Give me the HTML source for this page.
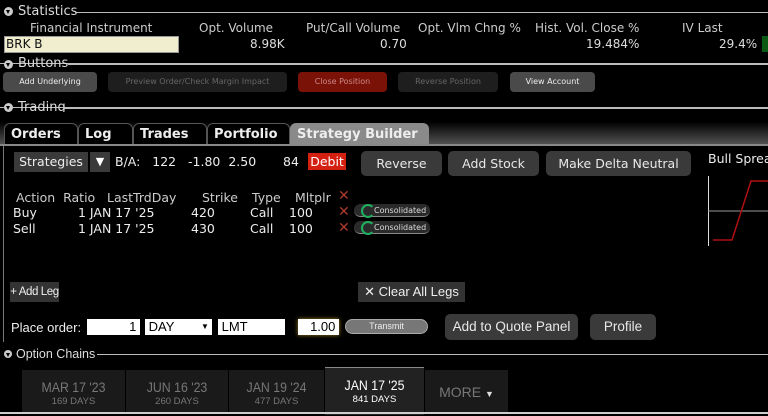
<html><head><style>
body{margin:0;width:768px;height:414px;background:#000;position:relative;overflow:hidden;font-family:"DejaVu Sans","Liberation Sans",sans-serif;color:#ddd}
div,span{position:absolute;white-space:nowrap}
.h{font-size:13px;color:#ddd}
.tri{width:9px;height:9px;border-radius:50%;background:#ccc}
.tri:after{content:"";position:absolute;left:2px;top:3px;border-left:2.5px solid transparent;border-right:2.5px solid transparent;border-top:4px solid #000}
.ln{height:1px;background:#bbb}
.c{font-size:12px;color:#ccc}
.b{font-size:8px;border-radius:4px;text-align:center;line-height:20px;height:20px}
.tab{top:123px;height:22px;border-radius:6px 6px 0 0;background:#000;border:1px solid #555;border-bottom:none;font:bold 13px "DejaVu Sans",sans-serif;color:#eee;line-height:22px;padding-left:6px;box-sizing:border-box}
.btn{background:#3a3a3a;border-radius:5px;font-size:12.5px;color:#e8e8e8;text-align:center}
.t{font-size:12.5px;color:#eee}
.ot{top:370px;height:44px;background:#1a1a1a;text-align:center;font-family:"Liberation Sans",sans-serif;color:#777}
.ot b{display:block;font-weight:normal;font-size:14px;margin-top:9px;transform:scaleX(.88)}
.ot i{display:block;font-style:normal;font-size:9.5px;margin-top:1px}
</style></head><body>
<div class="tri" style="left:4px;top:7px"></div><div class="h" style="left:18px;top:4px">Statistics</div><div class="ln" style="left:75px;top:12px;width:693px"></div>
<div class="c" style="left:30px;top:21px">Financial Instrument</div>
<div class="c" style="left:199px;top:21px">Opt. Volume</div>
<div class="c" style="left:306px;top:21px">Put/Call Volume</div>
<div class="c" style="left:418px;top:21px">Opt. Vlm Chng %</div>
<div class="c" style="left:535px;top:21px">Hist. Vol. Close %</div>
<div class="c" style="left:682px;top:21px">IV Last</div>
<div style="left:4px;top:36px;width:172px;height:15px;background:#f0eecf;border:1px solid #999;color:#111;font-size:12px;line-height:15px;padding-left:1px">BRK B</div>
<div class="c" style="left:250px;top:37px;color:#ddd">8.98K</div>
<div class="c" style="left:380px;top:37px;color:#ddd">0.70</div>
<div class="c" style="left:586px;top:37px;color:#ddd">19.484%</div>
<div class="c" style="left:719px;top:37px;color:#ddd">29.4%</div>
<div style="left:762px;top:36px;width:8px;height:16px;background:#0a5a14"></div>
<div class="ln" style="left:0;top:63px;width:768px"></div>
<div class="tri" style="left:4px;top:60px"></div><div class="h" style="left:18px;top:56px">Buttons</div><div class="ln" style="left:68px;top:64px;width:700px"></div>
<div class="b" style="left:3px;top:72px;width:94px;background:#4a4a4a;color:#eee">Add Underlying</div>
<div class="b" style="left:108px;top:72px;width:179px;background:#1e1e1e;color:#666">Preview Order/Check Margin Impact</div>
<div class="b" style="left:298px;top:72px;width:89px;background:#7a1208;color:#c88">Close Position</div>
<div class="b" style="left:398px;top:72px;width:100px;background:#1e1e1e;color:#666">Reverse Position</div>
<div class="b" style="left:510px;top:72px;width:85px;background:#4a4a4a;color:#eee">View Account</div>
<div class="ln" style="left:0;top:107px;width:768px"></div>
<div class="tri" style="left:4px;top:103px"></div><div class="h" style="left:18px;top:100px">Trading</div><div class="ln" style="left:64px;top:108px;width:704px"></div>
<div style="left:0;top:112px;width:768px;height:33px;background:linear-gradient(#000,#000 30%,#555)"></div>
<div class="tab" style="left:4px;width:74px">Orders</div>
<div class="tab" style="left:78px;width:55px">Log</div>
<div class="tab" style="left:133px;width:74px">Trades</div>
<div class="tab" style="left:207px;width:83px">Portfolio</div>
<div class="tab" style="left:290px;width:139px;background:#8a8a8a;color:#eee;border-color:#8a8a8a">Strategy Builder</div>
<div style="left:0;top:144px;width:768px;height:2px;background:#888"></div>
<div style="left:3px;top:146px;width:1px;height:196px;background:#777"></div>
<div style="left:14px;top:152px;width:74px;height:20px;background:#3a3a3a;font-size:12.5px;line-height:20px;text-align:center;color:#eee">Strategies</div>
<div style="left:90px;top:152px;width:20px;height:20px;background:#3a3a3a;font-size:11px;line-height:20px;text-align:center;color:#fff">▼</div>
<div class="t" style="left:115px;top:154px">B/A:&nbsp;&nbsp;&nbsp;122&nbsp;&nbsp;&nbsp;-1.80&nbsp;&nbsp;2.50</div>
<div class="t" style="left:283px;top:154px">84</div>
<div style="left:308px;top:153px;width:38px;height:17px;background:#d42010;color:#fff;font-size:12.5px;line-height:17px;text-align:center">Debit</div>
<div class="btn" style="left:361px;top:151px;width:81px;height:25px;line-height:25px">Reverse</div>
<div class="btn" style="left:448px;top:151px;width:91px;height:25px;line-height:25px">Add Stock</div>
<div class="btn" style="left:546px;top:151px;width:145px;height:25px;line-height:25px">Make Delta Neutral</div>
<div class="t" style="left:708px;top:151px">Bull Spread</div>
<svg style="position:absolute;left:700px;top:170px" width="68" height="85"><line x1="8.5" y1="6" x2="8.5" y2="76" stroke="#ddd"/><line x1="8" y1="41" x2="68" y2="41" stroke="#999"/><polyline points="13,70 32,70 51,11 68,11" fill="none" stroke="#b01010" stroke-width="1.5"/></svg>
<div class="t" style="left:16px;top:190px;color:#ccc">Action&nbsp;&nbsp;Ratio</div>
<div class="t" style="left:107px;top:190px;color:#ccc">LastTrdDay</div>
<div class="t" style="left:202px;top:190px;color:#ccc">Strike</div>
<div class="t" style="left:252px;top:190px;color:#ccc">Type</div>
<div class="t" style="left:295px;top:190px;color:#ccc">Mltplr</div>
<div style="left:338px;top:188px;color:#b03a30;font-size:14px;font-weight:bold">✕</div>
<div class="t" style="left:13px;top:205px">Buy</div><div class="t" style="left:78px;top:205px">1 JAN 17 '25</div><div class="t" style="left:191px;top:205px">420</div><div class="t" style="left:250px;top:205px">Call</div><div class="t" style="left:289px;top:205px">100</div>
<div style="left:338px;top:204px;color:#b03a30;font-size:14px;font-weight:bold">✕</div>
<div class="t" style="left:13px;top:221px">Sell</div><div class="t" style="left:78px;top:221px">1 JAN 17 '25</div><div class="t" style="left:191px;top:221px">430</div><div class="t" style="left:250px;top:221px">Call</div><div class="t" style="left:289px;top:221px">100</div>
<div style="left:338px;top:220px;color:#b03a30;font-size:14px;font-weight:bold">✕</div>
<div style="left:354px;top:204px;width:76px;height:13px;border-radius:7px;background:#2a2a2a;border-bottom:1px solid #888;font-size:8px;line-height:13px;color:#ddd;padding-left:20px;box-sizing:border-box">Consolidated</div>
<div style="left:361px;top:204px;width:10px;height:10px;border:2px solid #1fb060;border-radius:50%;border-right-color:transparent"></div>
<div style="left:354px;top:221px;width:76px;height:13px;border-radius:7px;background:#2a2a2a;border-bottom:1px solid #888;font-size:8px;line-height:13px;color:#ddd;padding-left:20px;box-sizing:border-box">Consolidated</div>
<div style="left:361px;top:221px;width:10px;height:10px;border:2px solid #1fb060;border-radius:50%;border-right-color:transparent"></div>
<div style="left:10px;top:282px;width:49px;height:20px;background:#333;font:11.5px 'Liberation Sans',sans-serif;letter-spacing:-0.4px;line-height:20px;text-align:center;color:#eee">+ Add Leg</div>
<div style="left:358px;top:282px;width:107px;height:20px;background:#333;font:13px 'Liberation Sans',sans-serif;line-height:20px;text-align:center;color:#eee">✕ Clear All Legs</div>
<div style="left:11px;top:320px;font:13px 'Liberation Sans',sans-serif;color:#eee">Place order:</div>
<div style="left:87px;top:319px;width:53px;height:16px;background:#fff;color:#000;font:13px 'Liberation Sans',sans-serif;text-align:right;line-height:16px">1&nbsp;</div>
<div style="left:145px;top:319px;width:67px;height:16px;background:#fff;color:#000;font:13px 'Liberation Sans',sans-serif;line-height:16px">&nbsp;DAY<span style="left:56px;top:0;font-size:8px">▼</span></div>
<div style="left:218px;top:319px;width:67px;height:16px;background:#fff;color:#000;font:13px 'Liberation Sans',sans-serif;line-height:16px">&nbsp;LMT</div>
<div style="left:298px;top:319px;width:41px;height:16px;background:#fff;color:#000;font:13px 'Liberation Sans',sans-serif;text-align:right;line-height:16px;box-shadow:0 0 4px #a08020">1.00&nbsp;</div>
<div style="left:345px;top:319px;width:83px;height:15px;border-radius:8px;background:#777;border:1px solid #aaa;box-sizing:border-box;font:9px 'Liberation Sans',sans-serif;color:#eee;text-align:center;line-height:13px">Transmit</div>
<div class="btn" style="left:445px;top:314px;width:133px;height:26px;line-height:26px;font-family:'Liberation Sans',sans-serif;font-size:13.5px">Add to Quote Panel</div>
<div class="btn" style="left:590px;top:314px;width:66px;height:26px;line-height:26px;font-family:'Liberation Sans',sans-serif;font-size:13.5px">Profile</div>
<div class="tri" style="left:4px;top:350px;width:8px;height:8px"></div><div style="left:16px;top:347px;font:12.5px 'Liberation Sans',sans-serif;color:#ddd">Option Chains</div><div class="ln" style="left:97px;top:354px;width:671px"></div>
<div class="ot" style="left:22px;width:103px"><b>MAR 17 '23</b><i>169 DAYS</i></div>
<div class="ot" style="left:126px;width:102px"><b>JUN 16 '23</b><i>260 DAYS</i></div>
<div class="ot" style="left:229px;width:95px"><b>JAN 19 '24</b><i>477 DAYS</i></div>
<div class="ot" style="left:325px;width:99px;top:367px;height:47px;background:#222;border-top:1px solid #888;color:#fff"><b>JAN 17 '25</b><i>841 DAYS</i></div>
<div class="ot" style="left:425px;width:83px;line-height:44px;font-size:14px">MORE <span style="position:static;font-size:9px;color:#ddd">▼</span></div>
<div style="left:0;top:412px;width:768px;height:2px;background:#ccc"></div>
</body></html>
